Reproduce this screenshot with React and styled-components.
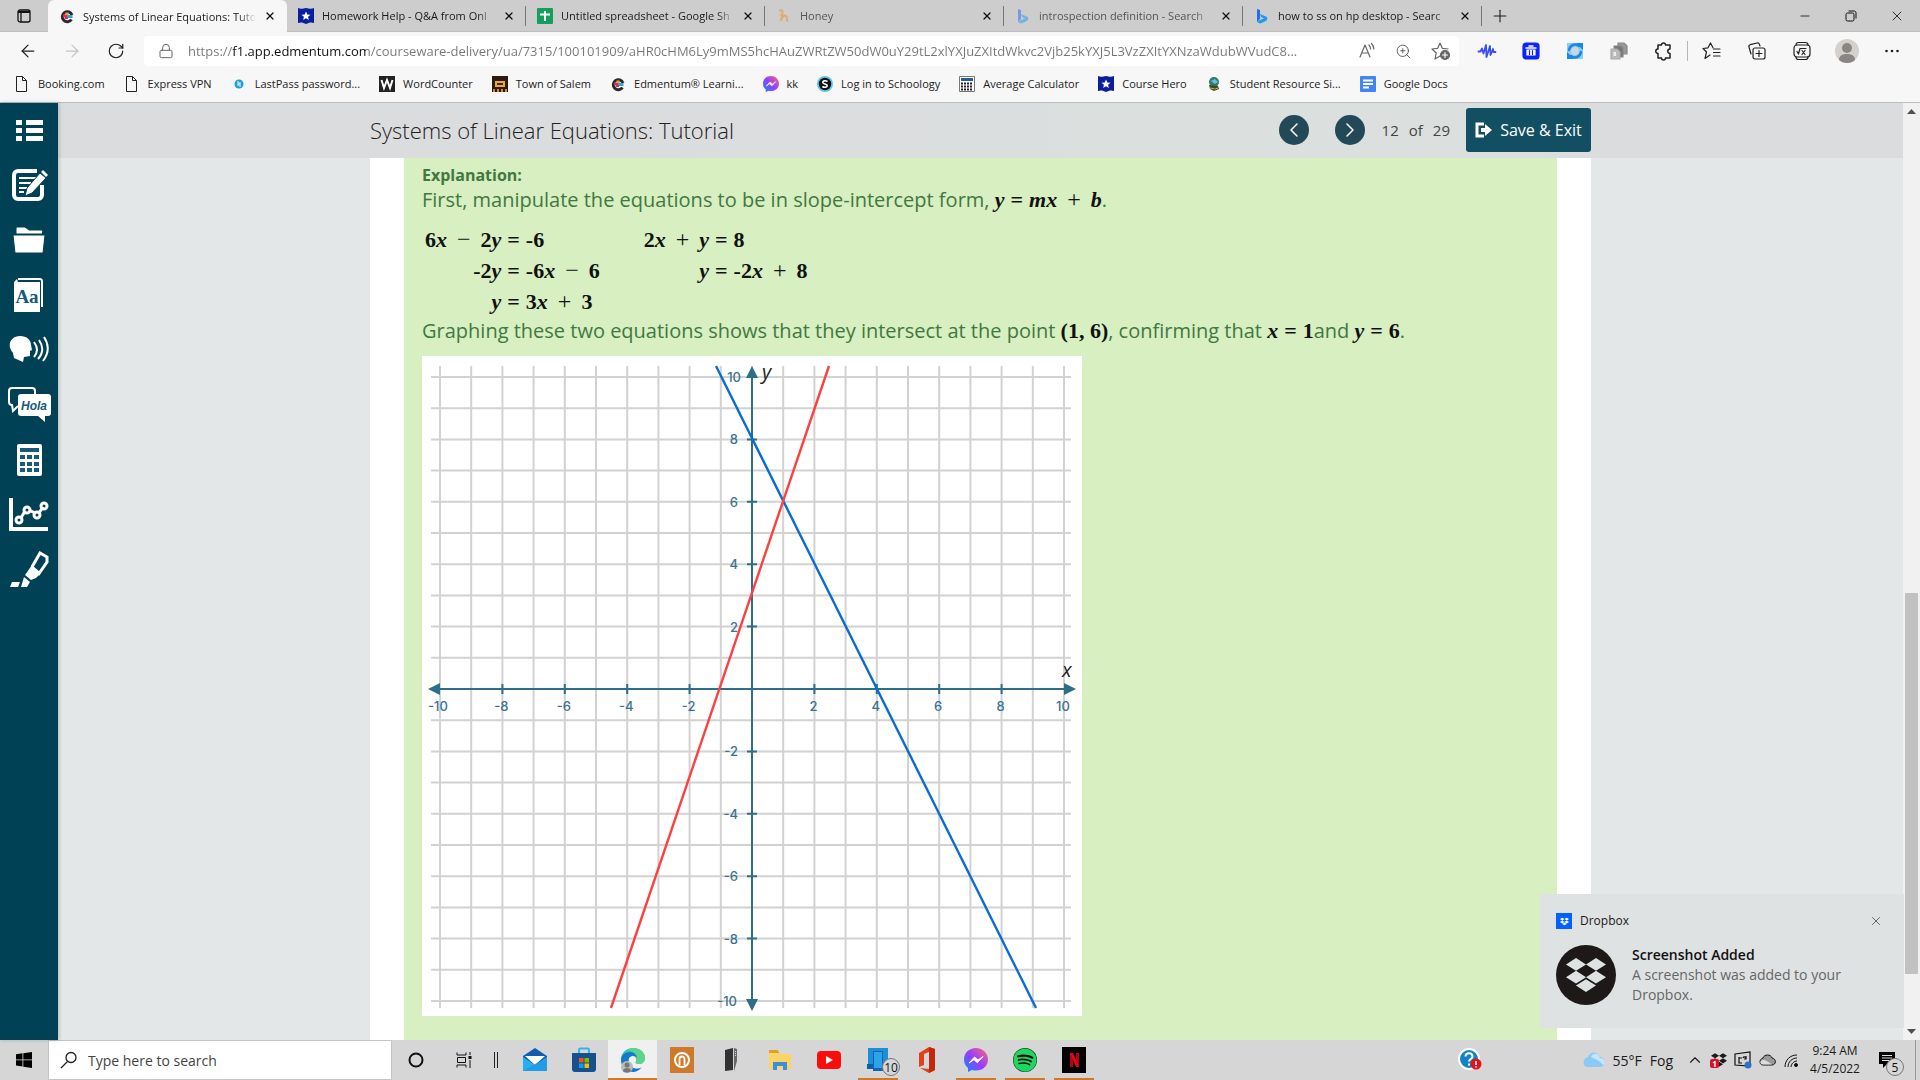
import { useState } from "react";
import styled, { createGlobalStyle, css } from "styled-components";
import {
  ArrowLeft,
  ArrowRight,
  ChevronLeft,
  ChevronRight,
  ChevronUp,
  Lock,
  Minus,
  Plus,
  RotateCw,
  X,
  ZoomIn,
} from "lucide-react";
import { FaDropbox, FaSpotify } from "react-icons/fa";

const URL_TEXT =
  "https://f1.app.edmentum.com/courseware-delivery/ua/7315/100101909/aHR0cHM6Ly9mMS5hcHAuZWRtZW50dW0uY29tL2xlYXJuZXItdWkvc2Vjb25kYXJ5L3VzZXItYXNzaWdubWVudC8...";

/* ---------- site icons ---------- */

const EdmentumIcon = () => (
  <svg width="16" height="16" viewBox="0 0 16 16" fill="none" strokeWidth="3">
    <path d="M12.500 11.500A5 5 0 1 1 13 7" stroke="#2a2a2a" />
    <path d="M4 8h4" stroke="#e6265d" />
    <path d="M8 8.500h5.500" stroke="#29a9e0" />
    <path d="M8 7V4.500" stroke="#f3a01c" />
    <path d="M6 10h3" stroke="#e6265d" strokeWidth="2" />
  </svg>
);

const HeroIcon = () => (
  <svg width="16" height="16" viewBox="0 0 16 16">
    <path d="M0 0c3 1.500 5 .5 8 0 3 .5 5 1.500 8 0v15c-3-1-5-.5-8 1-3-1.500-5-2-8-1z" fill="#0b1f9c" />
    <path d="M8 3.500l1.300 2.900 3.200.3-2.400 2.100.7 3.200L8 10.300 5.200 12l.7-3.200-2.400-2.100 3.200-.3z" fill="#fff" />
  </svg>
);

const SheetsIcon = () => (
  <svg width="16" height="16" viewBox="0 0 16 16">
    <rect width="16" height="16" rx="1" fill="#12a05c" />
    <path d="M8 3v10M3 6.500h10" stroke="#fff" strokeWidth="2" />
  </svg>
);

const HoneyIcon = () => (
  <svg width="16" height="16" viewBox="0 0 16 16" fill="none" stroke="#f08a24" strokeWidth="2">
    <path d="M3 3c2-1.500 4-1 3.500 1.500L5 13c1-4 3-6 5-5s0 5 2 5" />
    <path d="M3 7h6" strokeWidth="1" />
  </svg>
);

const BingIcon = () => (
  <svg width="16" height="16" viewBox="0 0 16 16">
    <path d="M3 1l3 1v9l-3 3z" fill="#2a6bea" />
    <path d="M3 14l3-2 4-1.500L7 9 6 6l7 3c1 3-1 4-3 5l-4 1.500z" fill="#1c9bf0" />
  </svg>
);

const PageIcon = () => (
  <svg width="16" height="16" viewBox="0 0 16 16" fill="none" stroke="#222">
    <path d="M2.500.5h6l4 4v11h-10zM8.500.5v4h4" />
  </svg>
);

const HpIcon = () => (
  <svg width="16" height="16" viewBox="0 0 16 16">
    <circle cx="8" cy="8" r="4.500" fill="#1ba0dc" />
    <path d="M7 5v5M9 6v5M7 8h2" stroke="#fff" />
  </svg>
);

const LetterIcon = () => (
  <svg width="16" height="16" viewBox="0 0 16 16">
    <rect width="16" height="16" fill="#222" />
    <path d="M2.500 4l2.500 8 3-8 3 8 2.500-8" fill="none" stroke="#fff" strokeWidth="2" />
  </svg>
);

const SalemIcon = () => (
  <svg width="16" height="16" viewBox="0 0 16 16">
    <rect width="16" height="16" fill="#2b1b12" />
    <path d="M3 5h10v6H3z" fill="#f5a623" />
    <path d="M5 7h6v2H5z" fill="#40240c" />
    <path d="M1 13h2v3H1zM5 13h2v3H5zM9 13h2v3H9zM13 13h2v3h-2z" fill="#d88a1c" />
  </svg>
);

const MessengerIcon = ({ size = 16 }) => (
  <svg width={size} height={size} viewBox="0 0 24 24">
    <defs>
      <linearGradient id="msg" x1="0" y1="1" x2="1" y2="0">
        <stop offset="0" stopColor="#0a8cff" />
        <stop offset=".5" stopColor="#9a3cff" />
        <stop offset="1" stopColor="#ff6b6b" />
      </linearGradient>
    </defs>
    <path d="M12 0C5 0 0 5 0 11.500c0 3.500 1.500 6.500 4 8.500V24l4-2c1.300.4 2.600.5 4 .5 7 0 12-4.800 12-11S19 0 12 0z" fill="url(#msg)" />
    <path d="M5 15l5.500-6 3.500 3 5-3.500-5.500 6.200-3.500-3z" fill="#fff" stroke="#fff" strokeLinejoin="round" />
  </svg>
);

const SchoologyIcon = () => (
  <svg width="16" height="16" viewBox="0 0 16 16">
    <circle cx="8" cy="8" r="8" fill="#5fc3ea" />
    <circle cx="8" cy="8" r="6.200" fill="#111" />
    <path d="M10.500 5.500C8 4 5.500 5 5.800 6.500 6 8.300 10.200 7.800 10.200 9.800c0 1.700-3 2-4.800.7" fill="none" stroke="#fff" strokeWidth="1.600" />
  </svg>
);

const AverageIcon = () => (
  <svg width="16" height="16" viewBox="0 0 16 16">
    <path d="M.5.5h15v15H.5z" fill="#fff" stroke="#777" />
    <path d="M2 2h12v3H2z" fill="#2a5c94" />
    <path d="M2 7.500h12M2 10.500h12M2 13.500h12" stroke="#222" strokeWidth="2" strokeDasharray="2 1" />
  </svg>
);

const StudentIcon = () => (
  <svg width="16" height="16" viewBox="0 0 16 16">
    <circle cx="8" cy="6" r="5" fill="#2c7f6b" />
    <path d="M5 5l4-2 3 3-3 2z" fill="#6fb7df" />
    <path d="M3 9l9 1 1 3-5 2-4-2z" fill="#3d4a28" />
    <path d="M4 12l5 1 3-1" stroke="#e0b040" />
  </svg>
);

const DocsIcon = () => (
  <svg width="16" height="16" viewBox="0 0 16 16">
    <rect width="16" height="16" rx="1" fill="#4285f4" />
    <path d="M3 4.500h10M3 8h10M3 11.500h6" stroke="#fff" strokeWidth="2" />
  </svg>
);

const tabs = [
  { title: "Systems of Linear Equations: Tuto", icon: EdmentumIcon, active: true },
  { title: "Homework Help - Q&A from Onl", icon: HeroIcon },
  { title: "Untitled spreadsheet - Google Sh", icon: SheetsIcon },
  { title: "Honey", icon: HoneyIcon, asleep: true },
  { title: "introspection definition - Search", icon: BingIcon, asleep: true },
  { title: "how to ss on hp desktop - Searc", icon: BingIcon },
];

const bookmarks = [
  { title: "Booking.com", icon: PageIcon },
  { title: "Express VPN", icon: PageIcon },
  { title: "LastPass password...", icon: HpIcon },
  { title: "WordCounter", icon: LetterIcon },
  { title: "Town of Salem", icon: SalemIcon },
  { title: "Edmentum® Learni...", icon: EdmentumIcon },
  { title: "kk", icon: MessengerIcon },
  { title: "Log in to Schoology", icon: SchoologyIcon },
  { title: "Average Calculator", icon: AverageIcon },
  { title: "Course Hero", icon: HeroIcon },
  { title: "Student Resource Si...", icon: StudentIcon },
  { title: "Google Docs", icon: DocsIcon },
];

/* ---------- toolbar icons ---------- */

const StrokeSvg = ({ size = 20, color = "#222", children }) => (
  <svg width={size} height={size} viewBox="0 0 20 20" fill="none" stroke={color} strokeWidth="1.200" strokeLinejoin="round" strokeLinecap="round">
    {children}
  </svg>
);

const ReadAloudIcon = () => (
  <StrokeSvg color="#666">
    <path d="M3 16L8 4l5 12M4.700 12h6.600M12 4c1 1 1.500 2 1.500 4M14.500 2.500c1.500 1.500 2.300 3.500 2.300 5.500" />
  </StrokeSvg>
);

const AddFavoriteIcon = () => (
  <StrokeSvg color="#666">
    <path d="M9 15l-5 3 1.200-6L1 8l5.700-.7L9 2l2.300 5.300L17 8" />
    <circle cx="14" cy="14" r="4.500" fill="#666" />
    <path d="M14 11.500v5M11.500 14h5" stroke="#fff" />
  </StrokeSvg>
);

const WaveIcon = () => (
  <StrokeSvg color="#3b4ff0">
    <path d="M1.500 10.500h2l1.500-3 1.500 5L9 4l.5 12L13 5l.5 9 2.500-6 .5 3h2" strokeWidth="1.800" />
  </StrokeSvg>
);

const BinIcon = () => (
  <StrokeSvg color="#fff">
    <rect x="2" y="2" width="16" height="16" rx="3" fill="#0b24fb" stroke="#0b24fb" />
    <path d="M5 7h10M8 5h4" strokeWidth="1.500" />
    <path d="M6 9h8v5H6z" fill="#fff" />
    <path d="M8.500 9.500v4M11.500 9.500v4" stroke="#0b24fb" />
  </StrokeSvg>
);

const SyncIcon = () => (
  <StrokeSvg color="#1689e8">
    <path d="M2 2h16v16H2z" fill="#8ccbf8" stroke="none" />
    <path d="M11 2h7v7zM9 18H2v-7z" fill="#1689e8" stroke="none" />
    <path d="M4 9c1-5 6-7 10-4M16 11c-1 5-6 7-10 4" strokeWidth="2.500" />
    <circle cx="10" cy="10" r="4" fill="#ccd6e2" stroke="none" />
  </StrokeSvg>
);

const CopyIcon = () => (
  <StrokeSvg color="#888">
    <path d="M9 2h6l3 3v8H9z" fill="#999" />
    <path d="M5 5h7l2 2v9H6z" fill="#777" />
    <path d="M2 8h6l3 3v7H2z" fill="#bbb" stroke="#aaa" />
    <path d="M4.500 11h2.500v4H4.500z" fill="#eee" stroke="none" />
  </StrokeSvg>
);

const PuzzleIcon = () => (
  <StrokeSvg>
    <path d="M5 4h3.500a2 2 0 0 1 4 0H17v4a2.200 2.200 0 0 0 0 4.500V17h-4.500a2 2 0 0 1-4 0H5v-4.500a2.200 2.200 0 0 1 0-4.500z" strokeWidth="1.500" />
  </StrokeSvg>
);

const FavoritesIcon = () => (
  <StrokeSvg>
    <path d="M8 14l-5 3.500L4.500 11 1 7.500l5-.7L8.500 2 11 6.800M11.500 8H18M11.500 11.500H18M11.500 15H18" />
  </StrokeSvg>
);

const CollectionsIcon = () => (
  <StrokeSvg>
    <path d="M4 13L2 6c-.3-1 .2-2 1.200-2.300L10 2c1-.2 2 .2 2.300 1.200L13 5" />
    <rect x="6" y="7" width="12" height="11" rx="2" />
    <path d="M12 9.500v6M9 12.500h6" />
  </StrokeSvg>
);

const MathSolverIcon = () => (
  <StrokeSvg>
    <rect x="2" y="4" width="16" height="12" rx="3" />
    <path d="M4 4c0-1.500 1-2.500 2.500-2.500h7C15 1.500 16 2.500 16 4M4 16c0 1.500 1 2.500 2.500 2.500h7c1.500 0 2.500-1 2.500-2.500M5 10.500l1.500 2.500L8 7.500h6M10 9.500l3 4M13 9.500l-3 4" />
  </StrokeSvg>
);

const AvatarIcon = () => (
  <svg width="24" height="24" viewBox="0 0 24 24">
    <circle cx="12" cy="12" r="12" fill="#d4d1cd" />
    <circle cx="12" cy="9" r="5" fill="#8a8683" />
    <path d="M4 21c0-4 3-6 8-6s8 2 8 6c-4 4-12 4-16 0z" fill="#8a8683" />
  </svg>
);

const DotsIcon = () => (
  <svg width="16" height="16" viewBox="0 0 16 16" fill="#222">
    <circle cx="2.500" cy="8" r="1.300" />
    <circle cx="8" cy="8" r="1.300" />
    <circle cx="13.500" cy="8" r="1.300" />
  </svg>
);

const extensions = [
  ["Wave", WaveIcon],
  ["Storage", BinIcon],
  ["Sync", SyncIcon],
  ["Copy", CopyIcon],
  ["Extensions", PuzzleIcon],
];

const browserTools = [
  ["Favorites", FavoritesIcon],
  ["Collections", CollectionsIcon],
  ["Math Solver", MathSolverIcon],
  ["Profile", AvatarIcon],
  ["Settings and more", DotsIcon],
];

/* ---------- course tools ---------- */

const ToolSvg = ({ children }) => (
  <svg width="44" height="40" viewBox="0 0 44 40" fill="#fff">
    {children}
  </svg>
);

const courseTools = [
  {
    name: "Table of contents",
    art: (
      <path d="M9 10h6v5H9zM19 10h17v5H19zM9 18h6v5H9zM19 18h17v5H19zM9 26h6v5H9zM19 26h17v5H19z" />
    ),
  },
  {
    name: "Notes",
    art: (
      <>
        <path d="M30 6H11a4 4 0 0 0-4 4v20a4 4 0 0 0 4 4h20a4 4 0 0 0 4-4V20" fill="none" stroke="#fff" strokeWidth="4" />
        <path d="M12 13h17M12 18h12M12 23h8M12 27h5" stroke="#fff" strokeWidth="2" />
        <path d="M18 31l2-8L33 8l6 5-14 15z" stroke="#004155" />
        <path d="M34 7l2-2 5 5-2 2z" />
      </>
    ),
  },
  {
    name: "Folder",
    art: (
      <path d="M9 14V9c0-1.500.6-2 2-2h7l4 3h12c1 0 1.500.5 1.500 1.500V14zM6 15h32l-2 18H8z" stroke="#004155" />
    ),
  },
  {
    name: "Glossary",
    art: (
      <>
        <path d="M11 4h21c3 0 3 1 3 3v25" fill="none" stroke="#fff" strokeWidth="2" />
        <path d="M10 4L7 7v30h26V7H11z" />
        <text x="20" y="28" textAnchor="middle" fontFamily="Liberation Serif, serif" fontWeight="700" fontSize="19" fill="#175a7c">
          Aa
        </text>
      </>
    ),
  },
  {
    name: "Text to speech",
    art: (
      <>
        <path d="M13 6c7 0 11 4 11 9l1 5-2 1v5l-6 1-1 5-9-4-1-5c-7-8-2-17 7-17z" />
        <path d="M27 12q6 8 0 15M32 10q7 10-1 19M37 7q8 12-1 24" fill="none" stroke="#fff" strokeWidth="2" />
      </>
    ),
  },
  {
    name: "Translate",
    art: (
      <>
        <path d="M11 21l-5 5-1-6c-2 0-3-1-3-3V6c0-2 1-3 3-3h20c2 0 3 1 3 3v4" fill="none" stroke="#fff" strokeWidth="2" />
        <path d="M14 9h27c2 0 3 1 3 3v16c0 2-1 3-3 3h-3v6l-7-6H14c-2 0-3-1-3-3V12c0-2 1-3 3-3z" />
        <text x="27" y="25" textAnchor="middle" fontFamily="Liberation Sans, sans-serif" fontWeight="700" fontStyle="italic" fontSize="12" fill="#175a7c">
          Hola
        </text>
      </>
    ),
  },
  {
    name: "Calculator",
    art: (
      <>
        <rect x="10" y="4" width="25" height="32" rx="2" />
        <path d="M13 8h19v4H13z" fill="#175a7c" />
        <path d="M13 17h19M13 24h19M13 30h19" stroke="#175a7c" strokeWidth="4" strokeDasharray="5 2" />
      </>
    ),
  },
  {
    name: "Graphing",
    art: (
      <g fill="none" stroke="#fff" strokeWidth="3">
        <path d="M4 3v31h37" strokeWidth="4" />
        <path d="M14 23l4-7M22 15l6 3M32 18l4-6" />
        <circle cx="12" cy="25" r="3" />
        <circle cx="20" cy="15" r="3" />
        <circle cx="30" cy="20" r="3" />
        <circle cx="37" cy="11" r="3" />
      </g>
    ),
  },
  {
    name: "Highlighter",
    art: (
      <>
        <path d="M25 17L33 3l7 4v5l-9 13" fill="none" stroke="#fff" strokeWidth="3" />
        <path d="M25 15l9 8-5 5-5 2-6-5z" />
        <path d="M17 27l6 5-3 5h-6zM5 32h8l-2 5H3z" />
      </>
    ),
  },
];

/* ---------- math ---------- */

const Formula = ({ children }) => (
  <FormulaText>
    {children.split(" ").map((token, i) => {
      if (token === "+" || token === "−") return <Operator key={i}>{token}</Operator>;
      if (token === "=") return <Equals key={i}>=</Equals>;
      return token
        .split(/([a-z])/)
        .filter(Boolean)
        .map((part, j) => (/[a-z]/.test(part) ? <i key={`${i}-${j}`}>{part}</i> : part));
    })}
  </FormulaText>
);

const firstSteps = [
  ["6x − 2y", "-6"],
  ["-2y", "-6x − 6"],
  ["y", "3x + 3"],
];

const secondSteps = [
  ["2x + y", "8"],
  ["y", "-2x + 8"],
];

const Steps = ({ rows }) => (
  <StepTable>
    <tbody>
      {rows.map(([left, right]) => (
        <tr key={left}>
          <td>
            <Formula>{left}</Formula>
          </td>
          <td>
            <Formula>=</Formula>
          </td>
          <td>
            <Formula>{right}</Formula>
          </td>
        </tr>
      ))}
    </tbody>
  </StepTable>
);

/* ---------- graph ---------- */

const STEP = 31.2;
const CX = 330;
const CY = 333;
const toX = (x) => CX + x * STEP;
const toY = (y) => CY - y * STEP;
const all = Array.from({ length: 21 }, (_, i) => i - 10);
const even = all.filter((n) => n % 2 === 0 && n !== 0);

const Graph = () => (
  <GraphSvg viewBox="0 0 660 660" role="img" aria-label="Graph of y = 3x + 3 and y = -2x + 8">
    <rect width="660" height="660" fill="#fff" />
    <g stroke="#d2d2d2" strokeWidth="2">
      {all.map((n) => (
        <path key={n} d={`M${toX(n)} 10V652M9 ${toY(n)}H649`} />
      ))}
    </g>
    <g stroke="#2d6e8b" strokeWidth="2">
      <path d={`M14 ${CY}H646M${CX} 16V648`} />
      {even
        .filter((n) => Math.abs(n) < 10)
        .map((n) => (
          <path key={n} d={`M${toX(n)} 328v10M325 ${toY(n)}h10`} />
        ))}
    </g>
    <path
      fill="#2d6e8b"
      d="M6 333l12-6v12zM654 333l-12-6v12zM330 10l-6 12h12zM330 655l-6-12h12z"
    />
    <GraphLabels>
      {even.map((n) => (
        <g key={n}>
          <text x={toX(n) + (n === -10 ? -2 : -1)} y="355" textAnchor="middle">
            {n}
          </text>
          <text x={n === 10 ? 319 : n === -10 ? 315 : 316} y={toY(n) + 5} textAnchor="end">
            {n}
          </text>
        </g>
      ))}
    </GraphLabels>
    <path d="M294 10L614 652" stroke="#0b6bd0" strokeWidth="2.400" />
    <path d="M407 10L189 652" stroke="#fb4141" strokeWidth="2.400" />
    <AxisName x="340" y="23">
      y
    </AxisName>
    <AxisName x="640" y="321">
      x
    </AxisName>
  </GraphSvg>
);

/* ---------- taskbar icons ---------- */

const Art = ({ size = 26, children }) => (
  <svg width={size} height={size} viewBox="0 0 26 26">
    {children}
  </svg>
);

const apps = [
  {
    name: "Mail",
    art: (
      <>
        <path d="M1 9L13 1l12 8v14H1z" fill="#0f5fae" />
        <path d="M3 9h20l-10 9z" fill="#fff" />
        <path d="M1 10l12 8 12-8v14H1z" fill="#29aef0" />
        <path d="M25 10v14H1z" fill="#1c8fe0" opacity=".6" />
      </>
    ),
  },
  {
    name: "Microsoft Store",
    art: (
      <>
        <path d="M8 7V3c0-1 .5-1.500 1.500-1.500h7c1 0 1.500.5 1.500 1.500v4" fill="none" stroke="#35b4ea" strokeWidth="2" />
        <path d="M1 6h24v16c0 2-1 3-3 3H4c-2 0-3-1-3-3z" fill="#17508c" />
        <path d="M8 11h4.500v4.500H8z" fill="#f25022" />
        <path d="M13.500 11H18v4.500h-4.500z" fill="#7fba00" />
        <path d="M8 16.500h4.500V21H8z" fill="#00a4ef" />
        <path d="M13.500 16.500H18V21h-4.500z" fill="#ffb900" />
      </>
    ),
  },
  {
    name: "Microsoft Edge",
    active: true,
    art: (
      <>
        <path d="M1 13C1 5 7 1 13 1s12 4 12 10c0 4-3 6-6 6s-4-1-3-3c1-3-1-5-4-5-5 0-9 3-11 4z" fill="#35c1b3" />
        <path d="M13 1c7 0 12 4 12 10 0 4-3 6-6 6s-4-1-3-3c2-5-2-10-8-11 1-1 3-2 5-2z" fill="#5fd38b" />
        <path d="M1 13c0-4 3-8 9-8 4 0 7 3 7 6-1-2-3-2.500-5-2-5 1-4 8 0 11 3 2 7 2 10 0-3 4-7 5-9 5C6 25 1 20 1 13z" fill="#1478cf" />
        <circle cx="7" cy="20" r="6" fill="#bbb" />
        <circle cx="7" cy="18" r="2.500" fill="#777" />
        <path d="M3 24c0-4 8-4 8 0-2 2-6 2-8 0z" fill="#777" />
      </>
    ),
  },
  {
    name: "Audiobooks",
    art: (
      <>
        <path d="M1 0h24v26H1z" fill="#cf7a2a" />
        <circle cx="13" cy="13" r="7" fill="none" stroke="#fff" strokeWidth="2" />
        <path d="M10.500 18v-6a2.500 2.500 0 0 1 5 0v6" fill="none" stroke="#fff" strokeWidth="1.800" />
      </>
    ),
  },
  {
    name: "Reader",
    art: (
      <>
        <path d="M7 3l8-2v22l-8 1z" fill="#333" />
        <path d="M16 1l3 1v12l-3 10z" fill="#666" />
        <path d="M17.500 4v6" stroke="#ddd" strokeDasharray="1 1" />
      </>
    ),
  },
  {
    name: "File Explorer",
    art: (
      <>
        <path d="M2 4h9l2 3h11v15H2z" fill="#fbd465" />
        <path d="M2 3h9l1 3H2z" fill="#e0a021" />
        <path d="M6 23v-8h14v8h-4v-4h-6v4z" fill="#3a8fdd" />
      </>
    ),
  },
  {
    name: "YouTube",
    art: (
      <>
        <rect x="1" y="4" width="24" height="18" rx="4" fill="#fb0d0d" />
        <path d="M10 9l7 4-7 4z" fill="#fff" />
      </>
    ),
  },
  {
    name: "Your Phone",
    open: true,
    badge: "10",
    art: (
      <>
        <path d="M3 1h20v16H3z" fill="#1b8fd8" />
        <path d="M8 4h10v20H8z" fill="#1364b4" />
        <path d="M9 5h8v16H9z" fill="#2ba4ea" />
        <path d="M2 17h6v5H2z" fill="#0f5ea8" />
      </>
    ),
  },
  {
    name: "Office",
    art: (
      <>
        <path d="M15 0l6 2v21l-6 3-9-5 9 1V5l-5 2v11l-5 2V6z" fill="#e0401c" />
        <path d="M15 0l6 2v21l-6 3z" fill="#c3270c" />
      </>
    ),
  },
  { name: "Messenger", open: true, icon: <MessengerIcon size={24} /> },
  { name: "Spotify", open: true, icon: <SpotifyMark /> },
  {
    name: "Netflix",
    open: true,
    art: (
      <>
        <path d="M1 0h24v26H1z" fill="#000" />
        <path d="M9 6h3v14H9zM15 6h3v14h-3z" fill="#b1060f" />
        <path d="M9 6h3l6 14h-3z" fill="#e50914" />
      </>
    ),
  },
];

function SpotifyMark() {
  return (
    <SpotifyDisc>
      <FaSpotify size={24} />
    </SpotifyDisc>
  );
}

const App = () => {
  const [url, setUrl] = useState(URL_TEXT);
  const [query, setQuery] = useState("");
  const [toastOpen, setToastOpen] = useState(true);

  return (
    <Screen>
      <GlobalStyle />
      <TabStrip>
        <TabActions aria-label="Tab actions">
          <svg width="14" height="14" viewBox="0 0 14 14" fill="none" stroke="#111" strokeWidth="1.300">
            <rect x="1" y="1" width="12" height="12" rx="2" />
            <path d="M1 3h12" strokeWidth="2" />
            <path d="M4 4v9" />
          </svg>
        </TabActions>
        {tabs.map(({ title, icon: Icon, active, asleep }) => (
          <Tab key={title} $active={active} $asleep={asleep}>
            <Icon />
            <TabTitle>{title}</TabTitle>
            <TabClose aria-label={`Close ${title}`}>
              <X size={12} strokeWidth={2.5} />
            </TabClose>
          </Tab>
        ))}
        <NewTab aria-label="New tab">
          <Plus size={20} strokeWidth={1.3} />
        </NewTab>
        <Spacer />
        <WindowButton aria-label="Minimize">
          <Minus size={14} strokeWidth={1.5} />
        </WindowButton>
        <WindowButton aria-label="Restore">
          <svg width="12" height="12" viewBox="0 0 12 12" fill="none" stroke="#111">
            <rect x="1" y="3" width="8" height="8" rx="1.500" />
            <path d="M3.500 1H9c1.200 0 2 .8 2 2v5.500" />
          </svg>
        </WindowButton>
        <WindowButton aria-label="Close window">
          <X size={16} strokeWidth={1.3} />
        </WindowButton>
      </TabStrip>

      <Toolbar>
        <NavButton aria-label="Back">
          <ArrowLeft size={20} strokeWidth={1.5} />
        </NavButton>
        <NavButton aria-label="Forward" disabled>
          <ArrowRight size={20} strokeWidth={1.5} />
        </NavButton>
        <NavButton aria-label="Refresh">
          <RotateCw size={18} strokeWidth={1.6} />
        </NavButton>
        <AddressBar>
          <Lock size={16} strokeWidth={1.5} color="#666" />
          <AddressInput aria-label="Address" value={url} onChange={(e) => setUrl(e.target.value)} />
          <AddressButton aria-label="Read aloud">
            <ReadAloudIcon />
          </AddressButton>
          <AddressButton aria-label="Zoom">
            <ZoomIn size={17} strokeWidth={1.3} color="#555" />
          </AddressButton>
          <AddressButton aria-label="Add to favorites">
            <AddFavoriteIcon />
          </AddressButton>
        </AddressBar>
        <ToolGroup>
          {extensions.map(([name, Icon]) => (
            <NavButton key={name} aria-label={name}>
              <Icon />
            </NavButton>
          ))}
        </ToolGroup>
        <Divider />
        <ToolGroup $gap="1px">
          {browserTools.map(([name, Icon]) => (
            <NavButton key={name} aria-label={name}>
              <Icon />
            </NavButton>
          ))}
        </ToolGroup>
      </Toolbar>

      <Bookmarks>
        {bookmarks.map(({ title, icon: Icon }) => (
          <a href="#" key={title}>
            <Icon />
            {title}
          </a>
        ))}
      </Bookmarks>

      <Page>
        <Sidebar>
          {courseTools.map(({ name, art }) => (
            <button key={name} aria-label={name}>
              <ToolSvg>{art}</ToolSvg>
            </button>
          ))}
        </Sidebar>
        <Course>
          <CourseHeader>
            <HeaderInner>
              <h1>Systems of Linear Equations: Tutorial</h1>
              <RoundButton aria-label="Previous page">
                <ChevronLeft size={24} strokeWidth={1.5} />
              </RoundButton>
              <RoundButton aria-label="Next page">
                <ChevronRight size={24} strokeWidth={1.5} />
              </RoundButton>
              <PageCount>
                <span>12</span>
                <span>of</span>
                <span>29</span>
              </PageCount>
              <SaveButton>
                <svg width="17" height="16" viewBox="0 0 17 16">
                  <path d="M9 2H2v12h7" fill="none" stroke="#fff" strokeWidth="3" />
                  <path d="M6 6h4V2l7 6-7 6v-4H6z" fill="#fff" />
                </svg>
                Save &amp; Exit
              </SaveButton>
            </HeaderInner>
          </CourseHeader>
          <Lesson>
            <Answer>
              <h2>Explanation:</h2>
              <p>
                First, manipulate the equations to be in slope-intercept form,{" "}
                <Formula>y = mx + b</Formula>.
              </p>
              <Work>
                <Steps rows={firstSteps} />
                <Steps rows={secondSteps} />
              </Work>
              <p>
                Graphing these two equations shows that they intersect at the point{" "}
                <Formula>{"(1,\u00a06)"}</Formula>, confirming that <Formula>x = 1</Formula>and{" "}
                <Formula>y = 6</Formula>.
              </p>
              <Graph />
            </Answer>
          </Lesson>
        </Course>
        <ScrollBar>
          <svg width="9" height="5" viewBox="0 0 9 5">
            <path d="M0 5l4.500-5L9 5z" fill="#505050" />
          </svg>
          <ScrollTrack>
            <div />
          </ScrollTrack>
          <svg width="9" height="5" viewBox="0 0 9 5">
            <path d="M0 0l4.500 5L9 0z" fill="#505050" />
          </svg>
        </ScrollBar>
        {toastOpen && (
          <Toast>
            <ToastHead>
              <ToastLogo>
                <FaDropbox size={9} />
              </ToastLogo>
              <span>Dropbox</span>
              <button aria-label="Dismiss" onClick={() => setToastOpen(false)}>
                <X size={14} strokeWidth={1.5} />
              </button>
            </ToastHead>
            <ToastBody>
              <ToastAvatar>
                <FaDropbox size={40} />
              </ToastAvatar>
              <div>
                <strong>Screenshot Added</strong>
                <p>A screenshot was added to your Dropbox.</p>
              </div>
            </ToastBody>
          </Toast>
        )}
      </Page>

      <Taskbar>
        <TaskButton aria-label="Start">
          <svg width="16" height="16" viewBox="0 0 16 16" fill="#000">
            <path d="M0 2.300l6.500-1v6.200H0zM7.300 1.200L16 0v7.500H7.300zM0 8.300h6.500v6.200L0 13.600zM7.300 8.300H16V16l-8.700-1.300z" />
          </svg>
        </TaskButton>
        <SearchBox>
          <svg width="18" height="18" viewBox="0 0 18 18" fill="none" stroke="#222" strokeWidth="1.300">
            <circle cx="11" cy="6.500" r="5" />
            <path d="M7.500 10.500L1 17" />
          </svg>
          <input
            aria-label="Search"
            placeholder="Type here to search"
            value={query}
            onChange={(e) => setQuery(e.target.value)}
          />
        </SearchBox>
        <TaskButton aria-label="Cortana">
          <svg width="16" height="16" viewBox="0 0 16 16">
            <circle cx="8" cy="8" r="6.500" fill="none" stroke="#111" strokeWidth="2" />
          </svg>
        </TaskButton>
        <TaskButton aria-label="Task view">
          <svg width="16" height="16" viewBox="0 0 16 16" fill="none" stroke="#111">
            <path d="M1 .5V3h9V.5M1 15.500V13h9v2.500M1.500 5.500h8v5h-8zM14 0v3M14 8v8" />
            <path d="M12.500 4h3v3h-3z" fill="#111" stroke="none" />
          </svg>
        </TaskButton>
        <TaskGrip />
        {apps.map(({ name, art, icon, active, open, badge }) => (
          <TaskApp key={name} aria-label={name} $active={active} $open={open}>
            {icon || <Art>{art}</Art>}
            {badge && <Badge>{badge}</Badge>}
          </TaskApp>
        ))}
        <Spacer />
        <HelpButton aria-label="HP Support">
          <svg width="24" height="24" viewBox="0 0 24 24">
            <circle cx="11" cy="11" r="10" fill="#1283c8" stroke="#fff" strokeWidth="2" />
            <path d="M7.500 8.500c.3-4.500 7-4 7 0 0 2.500-3.500 2.500-3.500 5M11 15.500v2" fill="none" stroke="#fff" strokeWidth="2" />
            <circle cx="18" cy="16" r="5.500" fill="#e5141c" />
            <path d="M18 13v4M18 18.200v1.300" stroke="#fff" strokeWidth="1.600" />
          </svg>
        </HelpButton>
        <Weather>
          <svg width="22" height="16" viewBox="0 0 22 16">
            <path d="M5 5c2-6 10-6 12 0 6 0 6 10 0 10H5C-1 15-1 6 5 5z" fill="#8ccaf5" />
            <path d="M8 5c2-5 8-4 9 1 5 0 6 5 3 7-4-5-8-6-12-8z" fill="#c5e5fb" />
          </svg>
          <span>55°F</span>
          <span>Fog</span>
        </Weather>
        <TrayButton aria-label="Show hidden icons">
          <ChevronUp size={18} strokeWidth={1.5} />
        </TrayButton>
        <TrayButton aria-label="Dropbox">
          <FaDropbox size={16} />
          <TrayAlert>1</TrayAlert>
        </TrayButton>
        <TrayButton aria-label="Display">
          <svg width="18" height="18" viewBox="0 0 18 18" fill="none" stroke="#111" strokeWidth="1.200">
            <path d="M1 3l15-2v14L1 14zM5 7h3M5 6v6h3M9 7c1-2 3-1 3 1M12 5v3h-2" />
            <circle cx="14" cy="14" r="3.500" fill="#2d72c4" stroke="none" />
          </svg>
        </TrayButton>
        <TrayButton aria-label="OneDrive">
          <svg width="17" height="13" viewBox="0 0 17 13">
            <path d="M4 4c1-4 8-4 9 0 5 1 4 7 0 7H4C0 11 0 5 4 4z" fill="#999" stroke="#111" />
            <path d="M4 10.500c-4 0-3-4.500 0-4.500 3 0 5 2 9 4.500z" fill="#ddd" stroke="none" />
          </svg>
        </TrayButton>
        <TrayButton aria-label="Network">
          <svg width="14" height="14" viewBox="0 0 14 14" fill="none" stroke="#111">
            <path d="M1 14C1 7 6 2 13 2M4 14c0-5 4-9 9-9M7 14c0-3 3-6 6-6" />
            <circle cx="12" cy="12" r="1.500" fill="#111" />
          </svg>
        </TrayButton>
        <Clock>
          <span>9:24 AM</span>
          <span>4/5/2022</span>
        </Clock>
        <NoticeButton aria-label="Notifications">
          <svg width="16" height="16" viewBox="0 0 16 16">
            <path d="M0 0h16v12H8l-4 4v-4H0z" fill="#000" />
            <path d="M3 3.500h10M3 6h10M3 8.500h7" stroke="#ddd" />
          </svg>
          <Badge $right="11px">5</Badge>
        </NoticeButton>
      </Taskbar>
    </Screen>
  );
};

export default App;

const GlobalStyle = createGlobalStyle`
  * {
    box-sizing: border-box;
  }
  body {
    margin: 0;
    font-family: "Open Sans", "Noto Sans", sans-serif;
    color: #1a1a1a;
  }
  button {
    border: none;
    background: none;
    padding: 0;
    font: inherit;
    color: inherit;
    cursor: pointer;
  }
  svg {
    flex-shrink: 0;
  }
`;

const center = css`
  display: flex;
  align-items: center;
  justify-content: center;
`;

const Screen = styled.div`
  height: 100vh;
  display: flex;
  flex-direction: column;
  overflow: hidden;
`;

const Spacer = styled.div`
  flex: 1;
`;

const TabStrip = styled.div`
  height: 32px;
  display: flex;
  align-items: stretch;
  background: #cdcdcd;
  border-bottom: 1px solid #bdbdbd;
`;

const TabActions = styled.button`
  ${center}
  width: 48px;
`;

const Tab = styled.div`
  flex: 0 1 239px;
  min-width: 0;
  display: flex;
  align-items: center;
  gap: 8px;
  padding: 0 11px;
  font-size: 11px;
  background: linear-gradient(#777, #777) no-repeat right center / 1px 20px;
  ${({ $asleep }) =>
    $asleep &&
    css`
      color: #555;
      > svg {
        opacity: 0.5;
      }
    `}
  ${({ $active }) =>
    $active &&
    css`
      background: #f7f7f7;
      border-radius: 6px 6px 0 0;
      margin-bottom: -1px;
    `}
`;

const TabTitle = styled.span`
  flex: 1;
  overflow: hidden;
  white-space: nowrap;
  mask-image: linear-gradient(90deg, #000 90%, transparent);
`;

const TabClose = styled.button`
  ${center}
  width: 12px;
  color: #111;
`;

const NewTab = styled.button`
  ${center}
  width: 36px;
`;

const WindowButton = styled.button`
  ${center}
  width: 46px;
`;

const Toolbar = styled.div`
  height: 38px;
  display: flex;
  align-items: center;
  padding: 0 6px;
  background: #f7f7f7;
`;

const NavButton = styled.button`
  ${center}
  width: 44px;
  height: 32px;
  color: #222;
  &:disabled {
    color: #c4c4c4;
  }
`;

const AddressBar = styled.div`
  flex: 1;
  height: 30px;
  margin: 0 6px;
  display: flex;
  align-items: center;
  padding: 0 0 0 14px;
  border-radius: 4px;
  background: #fff;
`;

/* the host part of the address is darker than the rest */
const AddressInput = styled.input`
  flex: 1;
  min-width: 0;
  margin: 0 8px 0 14px;
  padding: 0;
  border: none;
  outline: none;
  font: 13px "Open Sans", sans-serif;
  color: transparent;
  background: linear-gradient(90deg, #767676 44px, #111 44px, #111 178px, #767676 178px);
  background-clip: text;
  caret-color: #111;
`;

const AddressButton = styled.button`
  ${center}
  width: 37px;
  height: 30px;
`;

const ToolGroup = styled.div`
  display: flex;
  gap: ${({ $gap }) => $gap || 0};
`;

const Divider = styled.div`
  width: 1px;
  height: 20px;
  margin: 0 2px;
  background: #b5b5b5;
`;

const Bookmarks = styled.nav`
  height: 33px;
  display: flex;
  align-items: center;
  gap: 19px;
  padding: 0 14px 4px;
  background: #f7f7f7;
  border-bottom: 1px solid #bdbdbd;
  a {
    display: flex;
    align-items: center;
    gap: 8px;
    font-size: 11px;
    line-height: 16px;
    white-space: nowrap;
    color: #222;
    text-decoration: none;
  }
`;

const Page = styled.main`
  position: relative;
  flex: 1;
  min-height: 0;
  display: flex;
  background: #e3e7e8;
`;

const Sidebar = styled.nav`
  width: 58px;
  background: #004155;
  box-shadow: 1px 0 4px rgba(0, 0, 0, 0.2);
  z-index: 1;
  button {
    ${center}
    width: 100%;
    height: 55px;
    padding-bottom: 2px;
  }
`;

const Course = styled.div`
  flex: 1;
  min-width: 0;
  display: flex;
  flex-direction: column;
`;

const CourseHeader = styled.header`
  height: 55px;
  flex-shrink: 0;
  background: linear-gradient(90deg, #dbdcde 30%, #dbdfde 60%, #dbdfde 80%, #dbdcde 84%);
`;

const HeaderInner = styled.div`
  max-width: 1221px;
  height: 100%;
  margin: 0 auto;
  padding-bottom: 2px;
  display: flex;
  align-items: center;
  h1 {
    flex: 1;
    margin: 0;
    font-size: 22px;
    font-weight: 300;
    color: #222;
  }
`;

const RoundButton = styled.button`
  ${center}
  width: 30px;
  height: 30px;
  margin-right: 26px;
  border-radius: 50%;
  background: #234858;
  color: #fff;
  & + & {
    margin-right: 17px;
  }
`;

const PageCount = styled.div`
  display: flex;
  gap: 10px;
  margin-right: 16px;
  font-size: 15px;
  color: #444;
`;

const SaveButton = styled.button`
  ${center}
  gap: 8px;
  width: 125px;
  height: 44px;
  border-radius: 3px;
  background: #134f62;
  color: #fff;
  font-size: 16px;
`;

const Lesson = styled.section`
  flex: 1;
  min-height: 0;
  width: 100%;
  max-width: 1221px;
  margin: 0 auto;
  padding: 0 34px;
  overflow: hidden;
  background: #fff;
`;

const Answer = styled.article`
  min-height: 100%;
  padding: 5px 18px 30px;
  background: #d7efc1;
  color: #42783f;
  h2 {
    margin: 0;
    font-size: 16px;
    line-height: 24px;
  }
  p {
    margin: 0;
    font-size: 20px;
    line-height: 26px;
  }
`;

const FormulaText = styled.span`
  font-family: "Liberation Serif", serif;
  font-size: 22px;
  line-height: 20px;
  font-weight: 700;
  color: #111;
  white-space: nowrap;
`;

const Operator = styled.span`
  margin: 0 10px;
  font-size: 24px;
  font-weight: 400;
`;

const Equals = styled.span`
  margin: 0 6px;
`;

const Work = styled.div`
  display: flex;
  align-items: flex-start;
  gap: 44px;
  padding: 12px 3px 0;
`;

const StepTable = styled.table`
  border-collapse: collapse;
  td {
    height: 31px;
    padding: 0;
  }
  td:first-child {
    text-align: right;
  }
`;

const GraphSvg = styled.svg`
  display: block;
  width: 100%;
  max-width: 660px;
  margin-top: 12px;
`;

const GraphLabels = styled.g`
  font: 500 13px "Inter", sans-serif;
  fill: #3b7390;
`;

const AxisName = styled.text`
  font: italic 20px "Open Sans", sans-serif;
  fill: #222;
`;

const ScrollBar = styled.div`
  width: 17px;
  display: flex;
  flex-direction: column;
  align-items: center;
  padding: 6px 0;
  background: #f1f1f1;
`;

const ScrollTrack = styled.div`
  flex: 1;
  width: 13px;
  display: flex;
  flex-direction: column;
  padding: 479px 0 55px;
  div {
    flex: 1;
    background: #c1c1c1;
  }
`;

const Toast = styled.aside`
  position: absolute;
  right: 16px;
  bottom: 12px;
  z-index: 2;
  width: 364px;
  padding: 19px 16px 23px;
  background: #dfe2e2;
`;

const ToastHead = styled.div`
  display: flex;
  align-items: center;
  gap: 8px;
  font-size: 12px;
  line-height: 16px;
  span {
    flex: 1;
  }
  button {
    width: 14px;
    height: 14px;
    margin-right: 5px;
    color: #555;
  }
`;

const ToastLogo = styled.div`
  ${center}
  width: 16px;
  height: 16px;
  background: #0061fe;
  color: #fff;
`;

const ToastBody = styled.div`
  display: flex;
  align-items: center;
  gap: 16px;
  margin-top: 16px;
  font-size: 14px;
  line-height: 20px;
  strong {
    font-weight: 600;
    color: #111;
  }
  p {
    margin: 0;
    color: #666;
  }
`;

const ToastAvatar = styled.div`
  ${center}
  flex-shrink: 0;
  width: 60px;
  height: 60px;
  border-radius: 50%;
  background: #1e1919;
  color: #dfe2e2;
`;

const Taskbar = styled.footer`
  height: 40px;
  display: flex;
  align-items: stretch;
  background: #d6d6d6;
`;

const TaskButton = styled.button`
  ${center}
  width: 48px;
`;

const SearchBox = styled.label`
  display: flex;
  align-items: center;
  gap: 10px;
  width: 344px;
  padding: 0 11px;
  border: 1px solid #c4c4c4;
  background: #fff;
  input {
    flex: 1;
    min-width: 0;
    border: none;
    outline: none;
    padding: 0;
    font: 14px "Open Sans", sans-serif;
  }
  input::placeholder {
    color: #444;
  }
`;

const TaskGrip = styled.div`
  width: 4px;
  height: 16px;
  margin: auto 12px auto 6px;
  border: 1px solid #222;
  border-width: 0 1px;
`;

const TaskApp = styled.button`
  ${center}
  position: relative;
  width: 49px;
  ${({ $active }) => $active && "background: #f0f0f0;"}
  ${({ $active, $open }) =>
    ($active || $open) &&
    css`
      background-image: linear-gradient(#cf7a2a, #cf7a2a);
      background-repeat: no-repeat;
      background-position: bottom;
      background-size: ${$active ? "100%" : "40px"} 2px;
    `}
`;

const SpotifyDisc = styled.span`
  ${center}
  border-radius: 50%;
  background: #111;
  color: #1ed760;
`;

const Badge = styled.span`
  ${center}
  position: absolute;
  right: ${({ $right }) => $right || "2px"};
  bottom: 4px;
  width: 18px;
  height: 18px;
  border: 1px solid #777;
  border-radius: 50%;
  background: #d6d6d6;
  font-size: 12px;
  color: #111;
`;

const HelpButton = styled.button`
  ${center}
  width: 30px;
  margin-right: 98px;
`;

const Weather = styled.button`
  display: flex;
  align-items: center;
  gap: 8px;
  margin-right: 10px;
  font-size: 14px;
`;

const TrayButton = styled.button`
  ${center}
  position: relative;
  width: 24px;
`;

const TrayAlert = styled.span`
  ${center}
  position: absolute;
  left: 3px;
  bottom: 12px;
  width: 9px;
  height: 9px;
  border-radius: 2px;
  background: #d8102c;
  color: #fff;
  font-size: 8px;
  font-weight: 700;
`;

const Clock = styled.div`
  width: 64px;
  display: flex;
  flex-direction: column;
  justify-content: center;
  align-items: center;
  font-size: 12px;
  line-height: 18px;
`;

const NoticeButton = styled.button`
  ${center}
  position: relative;
  width: 49px;
  margin-right: 4px;
  padding-right: 8px;
  border-right: 1px solid #999;
`;
